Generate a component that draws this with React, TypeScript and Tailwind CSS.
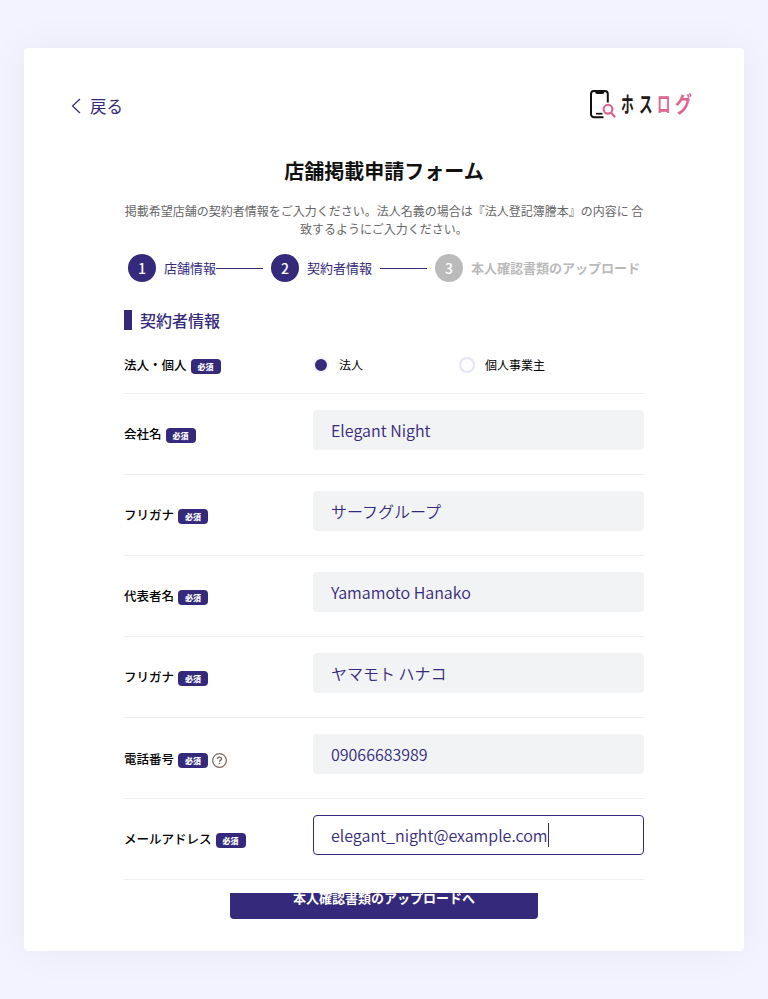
import React from 'react';

function Badge() {
  return (
    <span className="mt-[3px] ml-1 flex h-[15px] w-[30px] shrink-0 items-center justify-center rounded-[4px] bg-[#34297b] text-[8px] leading-none font-black text-white">
      必須
    </span>
  );
}

function HelpIcon() {
  return (
    <svg className="mt-[3px] ml-1" width="15" height="15" viewBox="0 0 15 15" fill="none" stroke="#7b6a5e" strokeWidth="1.2">
      <circle cx="7.5" cy="7.5" r="6.8" />
      <path d="M5.5 6C5.5 4.7 6.3 4.1 7.5 4.1S9.5 4.9 9.5 5.9C9.5 7.1 7.5 7.3 7.5 8.8" strokeWidth="1.4" />
      <path d="M7.5 9.8V11.2" strokeWidth="1.5" />
    </svg>
  );
}

function Logo() {
  return (
    <div className="flex h-7 w-[103px] items-start">
      <svg width="27" height="29" viewBox="0 0 27 29" fill="none" className="shrink-0">
        <path d="M17.8 12.5V4A3 3 0 0 0 14.8 1H4A3 3 0 0 0 1 4v20.2A3 3 0 0 0 4 27.2h9.5" stroke="#111" strokeWidth="2" />
        <path d="M5 1h9.5c0 2-.8 3-2.2 3H7.2C5.8 4 5 3 5 1Z" fill="#111" />
        <path d="M6 23.7h6.5" stroke="#111" strokeWidth="1.7" />
        <circle cx="18" cy="19.3" r="4.4" stroke="#dc6493" strokeWidth="2.2" />
        <path d="m21.2 22.7 4 4.6" stroke="#dc6493" strokeWidth="2.2" />
      </svg>
      <div className="ml-[4px] flex h-[26px] w-[73px] items-center text-[20px] leading-none font-bold text-[#231815]">
        <span className="w-[18px] origin-left scale-x-[0.64] scale-y-110">ホ</span>
        <span className="w-[18px] origin-left scale-x-[0.68] scale-y-110">ス</span>
        <span className="w-[18px] origin-left scale-x-[0.68] scale-y-110 text-[#dc6493]">ロ</span>
        <span className="w-[18px] origin-left scale-x-[0.85] scale-y-110 text-[#dc6493]">グ</span>
      </div>
    </div>
  );
}

function Step({ n, label, active = true }: { n: number; label: string; active?: boolean }) {
  return (
    <>
      <span className={`flex size-7 shrink-0 items-center justify-center rounded-full text-[14px] font-medium text-white ${active ? 'bg-[#34297b]' : 'bg-[#bababa]'}`}>
        {n}
      </span>
      <span className={`ml-2 shrink-0 text-[13px] whitespace-nowrap ${active ? 'text-[#34297b]' : 'font-bold text-[#bababa]'}`}>{label}</span>
    </>
  );
}

const fields = [
  { label: '会社名', value: 'Elegant Night' },
  { label: 'フリガナ', value: 'サーフグループ' },
  { label: '代表者名', value: 'Yamamoto Hanako' },
  { label: 'フリガナ', value: 'ヤマモト ハナコ' },
  { label: '電話番号', value: '09066683989', help: true },
  { label: 'メールアドレス', value: 'elegant_night@example.com', focused: true },
];

export default function App() {
  return (
    <div lang="ja" className="h-[999px] w-[768px] overflow-hidden bg-[#f3f3ff] px-6 pt-12 font-['Noto_Sans_CJK_JP',sans-serif]">
      <main className="h-[903px] rounded-[4px] bg-white shadow-[0_0_40px_rgba(0,0,0,0.05)]">
        <header className="flex items-start justify-between pt-[42px] pr-[51px] pl-[47px]">
          <button className="mt-1 flex h-6 items-center text-[16.5px] text-[#34297b]">
            <svg width="11" height="16" viewBox="0 0 11 16" fill="none" stroke="#34297b" strokeWidth="1.2" className="mr-2 mb-px">
              <path d="M9 1 1.5 8 9 15" />
            </svg>
            戻る
          </button>
          <Logo />
        </header>
        <div className="mx-auto w-[520px]">
          <h1 className="mt-[38px] text-center text-[20px] leading-[30px] font-bold text-[#111]">店舗掲載申請フォーム</h1>
          <p className="mt-4 text-center text-[12px] leading-[18px] text-[#666]">
            掲載希望店舗の契約者情報をご入力ください。法人名義の場合は『法人登記簿謄本』の内容に 合
            <br />
            致するようにご入力ください。
          </p>
          <div className="mt-4 flex h-7 items-center pl-1">
            <Step n={1} label="店舗情報" />
            <span className="mr-2 h-px w-[47px] bg-[#34297b]" />
            <Step n={2} label="契約者情報" />
            <span className="mr-2 ml-2 h-px w-[47px] bg-[#34297b]" />
            <Step n={3} label="本人確認書類のアップロード" active={false} />
          </div>
          <h2 className="mt-7 flex h-5 items-center border-l-8 border-[#34297b] pl-2 text-[16px] font-medium text-[#34297b]">契約者情報</h2>
          <div className="flex h-16 items-center border-b border-[#eeeff2] pt-[7px]">
            <div className="flex w-[189px] items-center text-[12.5px] font-medium">
              法人・個人
              <Badge />
            </div>
            <div className="flex w-[146px] items-center text-[12px]">
              <span className="mr-[10px] size-4 rounded-full border-2 border-[#f4f4f9] bg-[#34297b]" />
              法人
            </div>
            <div className="flex items-center text-[12px]">
              <span className="mr-[10px] size-4 rounded-full border-2 border-[#e2e6f0]" />
              個人事業主
            </div>
          </div>
          {fields.map((f, i) => (
            <div key={i} className="flex h-[81px] border-b border-[#eeeff2]">
              <div className={`flex w-[189px] items-center text-[12.5px] font-medium ${f.help ? 'pt-0.5' : ''}`}>
                {f.label}
                <Badge />
                {f.help && <HelpIcon />}
              </div>
              <div className={`mt-4 flex h-10 w-[331px] items-center rounded-[4px] border pl-[17px] text-[16px] font-[350] text-[#34297b] ${f.focused ? 'border-[#34297b] bg-white' : 'border-[#f2f3f5] bg-[#f2f3f5]'}`}>
                {f.value}
                {f.focused && <span className="h-6 w-px bg-[#34297b]" />}
              </div>
            </div>
          ))}
          <div className="mx-auto mt-[13px] flex h-[26px] w-[308px] items-end justify-center overflow-hidden rounded-b-[4px] bg-[#34297b]">
            <span className="pb-[11px] text-[13px] leading-5 font-bold text-white">本人確認書類のアップロードへ</span>
          </div>
        </div>
      </main>
    </div>
  );
}
